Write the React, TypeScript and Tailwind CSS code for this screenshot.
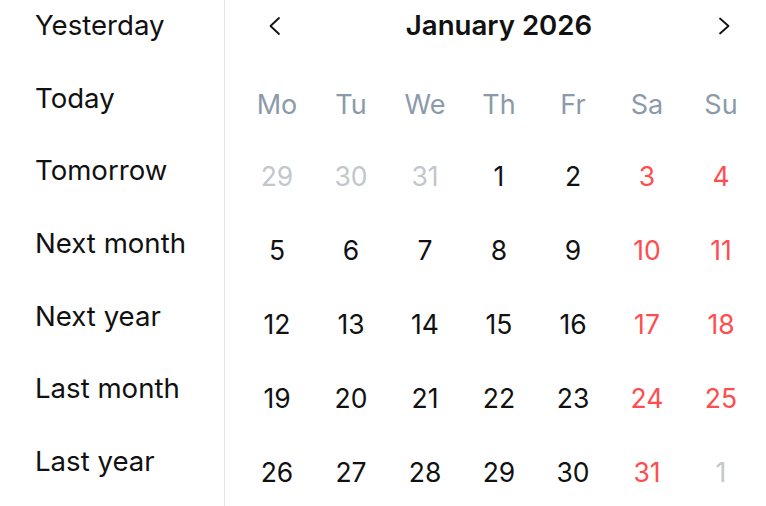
import React from "react";

const shortcuts = ["Yesterday", "Today", "Tomorrow", "Next month", "Next year", "Last month", "Last year"];
const weekdays = ["Mo", "Tu", "We", "Th", "Fr", "Sa", "Su"];

type Cell = { d: number; outside: boolean };

function buildCells(): Cell[] {
  const cells: Cell[] = [];
  [29, 30, 31].forEach((d) => cells.push({ d, outside: true }));
  for (let d = 1; d <= 31; d++) cells.push({ d, outside: false });
  cells.push({ d: 1, outside: true });
  return cells;
}

export default function App() {
  const cells = buildCells();
  const rows: Cell[][] = [];
  for (let i = 0; i < cells.length; i += 7) rows.push(cells.slice(i, i + 7));

  return (
    <div
      className="flex h-[506px] w-[766px] overflow-hidden bg-white text-black"
      style={{ fontFamily: "Inter, 'Noto Sans', sans-serif" }}
    >
      <div className="flex w-[225px] shrink-0 flex-col border-r border-[#e3e7ed]">
        {shortcuts.map((s) => (
          <div key={s} className="h-[72.67px] shrink-0 pl-[35px] pt-[7px] text-[27.6px] leading-[36px] text-[#111]">
            {s}
          </div>
        ))}
      </div>

      <div className="flex flex-1 flex-col pl-[15px] pr-[8px]">
        <div className="grid h-[50px] shrink-0 grid-cols-[74px_1fr_74px] items-center">
          <div className="flex justify-center pr-[5px] pt-[2px]">
            <svg width="13" height="20" viewBox="0 0 13 20" fill="none">
              <path d="M11 2 L2.5 10 L11 18" stroke="#111" strokeWidth="1.8" strokeLinecap="round" strokeLinejoin="round" />
            </svg>
          </div>
          <div className="text-center text-[27.6px] font-semibold leading-[36px] text-[#111]">January 2026</div>
          <div className="flex justify-center pl-[6px] pt-[2px]">
            <svg width="13" height="20" viewBox="0 0 13 20" fill="none">
              <path d="M2 2.5 L10.5 10 L2 17.5" stroke="#111" strokeWidth="1.8" strokeLinecap="round" strokeLinejoin="round" />
            </svg>
          </div>
        </div>

        <div className="mt-[20.5px] grid h-[68px] shrink-0 grid-cols-7 items-center">
          {weekdays.map((w) => (
            <div key={w} className="text-center text-[27px] leading-[36px] text-[#8b9aab]">
              {w}
            </div>
          ))}
        </div>

        {rows.map((row, ri) => (
          <div key={ri} className="grid h-[74px] shrink-0 grid-cols-7 items-center">
            {row.map((c, ci) => {
              const weekend = ci >= 5;
              const color = c.outside ? "text-[#c3c6cc]" : weekend ? "text-[#ff4d4f]" : "text-[#111]";
              return (
                <div key={ci} className={`text-center text-[26.5px] leading-[36px] ${color}`}>
                  {c.d}
                </div>
              );
            })}
          </div>
        ))}
      </div>
    </div>
  );
}
